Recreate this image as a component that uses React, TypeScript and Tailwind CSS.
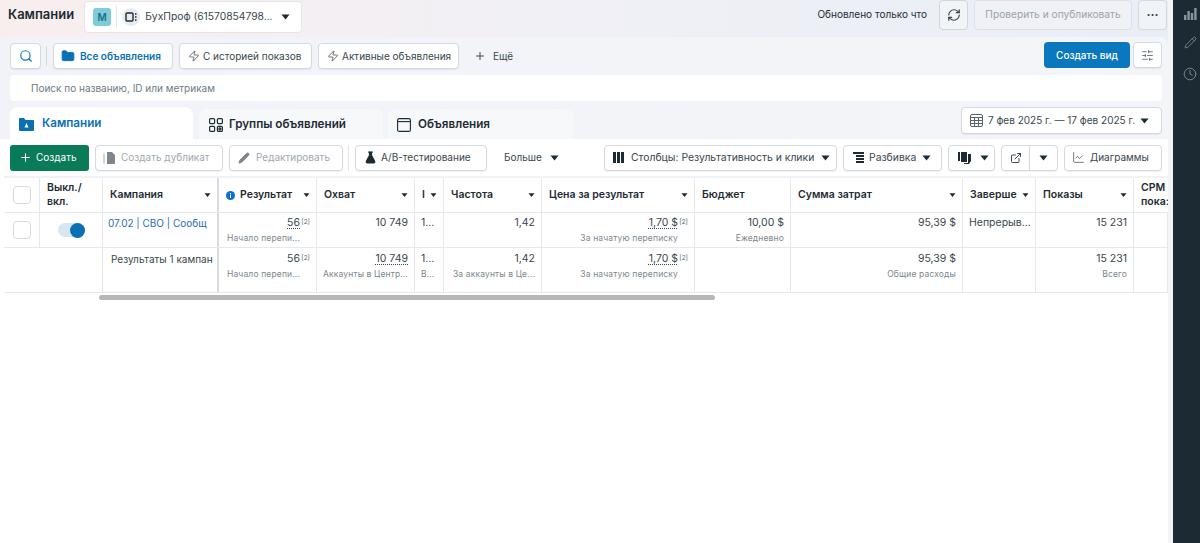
import type { ReactNode } from "react";
import {
  ChartLine,
  Clock,
  ExternalLink,
  FlaskConical,
  Folder,
  Pencil,
  Plus,
  RefreshCw,
  Search,
  SlidersHorizontal,
  Zap,
} from "lucide-react";

const Caret = ({ className = "" }: { className?: string }) => (
  <svg width="9" height="6" viewBox="0 0 9 6" className={`shrink-0 ${className}`}>
    <path d="M0.5 0.5h8L4.5 5.5z" fill="#1c2b33" />
  </svg>
);

const btn =
  "flex h-[26px] shrink-0 items-center whitespace-nowrap rounded-[4px] border border-[#d5dae1] bg-white text-[10px] shadow-[0_1px_1px_rgba(0,0,0,0.06)] [&_svg]:shrink-0";

const columns =
  "grid grid-cols-[36px_63px_114px_2px_98px_98px_29px_98px_153px_96px_172px_73px_98px_34px]";

const HeadCell = ({ children, caret = true, right = true }: { children: ReactNode; caret?: boolean; right?: boolean }) => (
  <div className={`flex h-[34px] items-center justify-between overflow-hidden pl-[7px] pr-[5px] text-[10.5px] font-semibold leading-[14px] text-[#1c2b33] ${right ? "border-r border-[#e6e8eb]" : ""}`}>
    <span className="flex min-w-0 items-center gap-[5px] whitespace-nowrap">{children}</span>
    {caret && <Caret className="ml-1 scale-75" />}
  </div>
);

const Cell = ({
  value,
  sub,
  tall,
  dotted,
  sup,
  left,
}: {
  value?: string;
  sub?: string;
  tall?: boolean;
  dotted?: boolean;
  sup?: boolean;
  left?: boolean;
}) => (
  <div
    className={`overflow-hidden border-r border-[#e6e8eb] pl-[6px] ${sup ? "pr-[16px]" : "pr-[6px]"} ${left ? "text-left" : "text-right"} ${
      tall ? "h-[44px] pt-[4px]" : "h-[34px] pt-[3px]"
    }`}
  >
    {value && (
      <div className="relative whitespace-nowrap text-[10.5px] leading-[14px] text-[#39464e]">
        <span className={dotted ? "underline decoration-dotted decoration-[#39464e] underline-offset-2" : ""}>{value}</span>
        {sup && <span className="absolute -right-[10px] top-[-1px] text-[6.5px] text-[#55626b]">[2]</span>}
      </div>
    )}
    {sub && <div className="mt-[2px] truncate text-[8.5px] leading-[12px] tracking-[0.15px] text-[#7d878e]">{sub}</div>}
  </div>
);

const Check = () => <div className="h-[18px] w-[18px] rounded-[4px] border border-[#d5dae1] bg-white" />;

export default function App() {
  return (
    <div className="flex h-[543px] w-[1200px] overflow-hidden bg-white font-['Inter',sans-serif] text-[#1c2b33]">
      <main className="flex w-[1168px] shrink-0 flex-col">
        <div className="bg-gradient-to-r from-[#f9eeee] via-[#f0f0f6] to-[#e9eef6]">
          <header className="flex h-[37px] items-start pl-2 pr-[1px]">
            <h1 className="mt-[6px] text-[13px] font-semibold leading-[16px]">Кампании</h1>
            <div className="ml-[10px] mt-[1px] flex h-[32px] w-[218px] shrink-0 items-center rounded-[4px] border border-[#e4e6ea] bg-white pl-2 pr-[11px]">
              <span className="flex h-[18px] w-[18px] items-center justify-center rounded-[3px] bg-[#7cccdc] text-[10px] font-semibold text-[#246c7c]">M</span>
              <span className="ml-[5px] h-[22px] w-px bg-[#e4e6ea]" />
              <span className="ml-[5px] flex h-[18px] w-[18px] items-center justify-center rounded-full bg-[#e8ebef]">
                <svg width="12" height="10" viewBox="0 0 12 10" fill="none" stroke="#1c2b33" strokeWidth="1.4">
                  <rect x="1" y="1" width="7" height="8" rx="1" />
                  <path d="M10 2h1.5M10 5h1.5M10 8h1.5" />
                </svg>
              </span>
              <span className="ml-[5px] flex-1 whitespace-nowrap text-[10.3px] text-[#39464e]">БухПроф (61570854798...</span>
              <Caret />
            </div>
            <span className="ml-auto mt-[7px] text-[10px] leading-[14px] text-[#1c2b33]">Обновлено только что</span>
            <div className="ml-3 flex h-[30px] w-[29px] shrink-0 items-center justify-center rounded-[4px] border border-[#d0d6de] bg-[#f2f4f8]">
              <RefreshCw size={14} strokeWidth={2} className="text-[#39464e]" />
            </div>
            <div className="ml-[6px] flex h-[30px] w-[158px] shrink-0 items-center justify-center rounded-[4px] border border-[#dde1e7] bg-[#eff1f6] text-[10.2px] text-[#9aa3aa]">
              Проверить и опубликовать
            </div>
            <div className="ml-[6px] flex h-[30px] w-[29px] shrink-0 items-center justify-center rounded-[4px] border border-[#d5dae1] bg-[#f0f3f8] pb-[6px] text-[12px] font-bold leading-none text-[#39464e]">
              ...
            </div>
          </header>

          <section className="rounded-t-[8px] bg-gradient-to-r from-[#f1f3f8] to-[#f3f5f9] pl-[10px] pr-[6px] pt-[5px]">
            <div className="flex h-[28px] items-center">
              <div className={`${btn} w-[31px] justify-center border-[#8fb6d3]`}>
                <Search size={14} className="text-[#0a78be]" />
              </div>
              <span className="ml-[5px] h-[20px] w-px bg-[#d5dae1]" />
              <div className={`${btn} ml-[6px] w-[120px] gap-[5px] border-[#8fb6d3] pl-[7px] font-semibold text-[#0a70b4]`}>
                <Folder size={14} fill="#0a70b4" strokeWidth={1.5} />
                Все объявления
              </div>
              <div className={`${btn} ml-[6px] w-[133px] gap-[3px] pl-[8px] text-[#39464e]`}>
                <Zap size={12} strokeWidth={1.5} />
                С историей показов
              </div>
              <div className={`${btn} ml-[6px] w-[141px] gap-[3px] pl-[8px] text-[#39464e]`}>
                <Zap size={12} strokeWidth={1.5} />
                Активные объявления
              </div>
              <div className="ml-[15px] flex items-center gap-[7px] text-[10px] text-[#39464e]">
                <Plus size={12} />
                Ещё
              </div>
              <div className="ml-auto -mt-[2px] flex h-[26px] w-[86px] shrink-0 items-center justify-center rounded-[4px] bg-[#0a78be] text-[10px] font-medium text-white">
                Создать вид
              </div>
              <div className={`${btn} ml-[3px] -mt-[2px] w-[29px] justify-center bg-[#f4f6f9] text-[#39464e]`}>
                <SlidersHorizontal size={13} strokeWidth={1.3} />
              </div>
            </div>

            <div className="mt-[5px] flex h-[26px] items-center rounded-[4px] bg-white pl-[21px] text-[10px] text-[#6f7a82]">
              Поиск по названию, ID или метрикам
            </div>

            <div className="mt-[6px] flex h-[32px] items-start">
              <div className="flex h-[32px] w-[183px] shrink-0 items-center gap-[8px] rounded-t-[8px] bg-white pl-[9px] pt-[2px] text-[11.7px] font-semibold text-[#0a70b4]">
                <svg width="15" height="14" viewBox="0 0 15 14">
                  <path d="M0 2a1 1 0 0 1 1-1h4l1.5 2H14a1 1 0 0 1 1 1v9a1 1 0 0 1-1 1H1a1 1 0 0 1-1-1z" fill="#0a70b4" />
                  <path d="M7.5 6l2 4.5h-4z" fill="#fff" />
                </svg>
                Кампании
              </div>
              <div className="ml-[6px] mt-[2px] flex h-[30px] w-[184px] shrink-0 items-center gap-[6px] rounded-t-[8px] bg-[#f7f8fa] pl-[10px] pt-[2px] text-[11.7px] font-semibold">
                <svg width="14" height="14" viewBox="0 0 14 14" fill="none" stroke="#1c2b33" strokeWidth="1.2">
                  <rect x="0.6" y="0.6" width="5" height="5" rx="1" />
                  <rect x="8.4" y="0.6" width="5" height="5" rx="1" />
                  <rect x="0.6" y="8.4" width="5" height="5" rx="1" />
                  <rect x="8.4" y="8.4" width="5" height="5" rx="1" />
                  <circle cx="10.9" cy="10.9" r="1" />
                </svg>
                Группы объявлений
              </div>
              <div className="ml-[5px] mt-[2px] flex h-[30px] w-[185px] shrink-0 items-center gap-[7px] rounded-t-[8px] bg-[#f7f8fa] pl-[9px] pt-[2px] text-[11.7px] font-semibold">
                <svg width="14" height="14" viewBox="0 0 14 14" fill="none" stroke="#1c2b33" strokeWidth="1.1">
                  <rect x="0.6" y="0.6" width="12.8" height="12.8" rx="1.5" />
                  <path d="M0.6 3.6h12.8" />
                </svg>
                Объявления
              </div>
              <div className={`${btn} ml-auto h-[27px] w-[201px] gap-[5px] border-[#ccd2da] bg-[#f1f3f7] pl-[8px] text-[#39464e]`}>
                <svg width="13" height="13" viewBox="0 0 13 13" fill="none" stroke="#55626b" strokeWidth="1">
                  <rect x="0.5" y="0.5" width="12" height="12" rx="1.5" />
                  <path d="M0.5 3.5h12M0.5 6.5h12M0.5 9.5h12M4.5 3.5v9M8.5 3.5v9" />
                </svg>
                <span className="flex-1">7 фев 2025 г. — 17 фев 2025 г.</span>
                <Caret className="mr-[12px]" />
              </div>
            </div>
          </section>
        </div>

        <section className="flex flex-col bg-white pl-[4px]">
          <div className="flex h-[37px] items-center pl-[6px] pr-[6px] text-[10px]">
            <div className="flex h-[26px] w-[79px] shrink-0 items-center gap-[4px] rounded-[3px] bg-[#0a7b58] pl-[9px] text-white">
              <Plus size={13} strokeWidth={2} />
              Создать
            </div>
            <div className={`${btn} ml-[6px] w-[128px] gap-[5px] pl-[7px] text-[#a0a8ae]`}>
              <svg width="13" height="14" viewBox="0 0 13 14">
                <path d="M1 2.5v10" stroke="#a0a8ae" strokeWidth="1" fill="none" />
                <path d="M4 1h5l3 3v8a1 1 0 0 1-1 1H4z" fill="#7e878d" />
              </svg>
              Создать дубликат
            </div>
            <div className={`${btn} ml-[6px] w-[114px] gap-[6px] pl-[8px] text-[#a0a8ae]`}>
              <Pencil size={12} fill="#7e878d" className="text-[#7e878d]" />
              Редактировать
            </div>
            <span className="ml-[5px] h-[26px] w-px shrink-0 bg-[#e4e6ea]" />
            <div className={`${btn} ml-[6px] w-[132px] gap-[4px] border-[#c4cad2] pl-[8px] text-[#39464e]`}>
              <FlaskConical size={13} fill="#1c2b33" className="text-[#1c2b33]" />
              A/B-тестирование
            </div>
            <div className="ml-[17px] flex shrink-0 items-center gap-[8px] text-[#39464e]">
              Больше
              <Caret />
            </div>
            <div className={`${btn} ml-auto w-[233px] gap-[7px] pl-[8px] text-[#39464e]`}>
              <svg width="11" height="11" viewBox="0 0 11 11" fill="#1c2b33">
                <rect width="3" height="11" />
                <rect x="4" width="3" height="11" />
                <rect x="8" width="3" height="11" />
              </svg>
              <span className="flex-1 text-[10.4px]">Столбцы: Результативность и клики</span>
              <Caret className="mr-[8px]" />
            </div>
            <div className={`${btn} ml-[6px] w-[99px] gap-[5px] pl-[9px] text-[#39464e]`}>
              <svg width="11" height="11" viewBox="0 0 11 11" fill="#1c2b33">
                <rect width="11" height="2" />
                <rect x="3" y="3" width="8" height="2" />
                <rect x="3" y="6" width="8" height="2" />
                <rect x="3" y="9" width="8" height="2" />
              </svg>
              <span className="flex-1 text-[10.4px]">Разбивка</span>
              <Caret className="mr-[10px]" />
            </div>
            <div className={`${btn} ml-[6px] w-[47px] gap-[9px] pl-[9px] text-[#39464e]`}>
              <svg width="13" height="12" viewBox="0 0 13 12" fill="#1c2b33">
                <rect width="2" height="9" />
                <rect x="3" width="6" height="10" />
                <path d="M10 2h3v7l-2 3h-5v-1h4z" />
              </svg>
              <Caret />
            </div>
            <div className={`${btn} ml-[6px] w-[57px] text-[#39464e]`}>
              <span className="flex h-full w-[28px] items-center justify-center border-r border-[#d5dae1]">
                <ExternalLink size={12} />
              </span>
              <span className="flex flex-1 justify-center">
                <Caret />
              </span>
            </div>
            <div className={`${btn} ml-[6px] w-[98px] gap-[5px] pl-[7px] text-[#39464e]`}>
              <ChartLine size={13} strokeWidth={1.3} />
              Диаграммы
            </div>
          </div>
          <div className="h-[2px] bg-[#f0f2f5]" />

          <div className={columns}>
            <div className="flex h-[34px] items-center justify-center border-r border-[#e6e8eb]"><Check /></div>
            <HeadCell caret={false}>
              <span className="whitespace-normal">Выкл./ вкл.</span>
            </HeadCell>
            <HeadCell right={false}>Кампания</HeadCell>
            <div className="bg-[#d8dbdf]" />
            <HeadCell>
              <svg width="9" height="9" viewBox="0 0 9 9" className="shrink-0">
                <circle cx="4.5" cy="4.5" r="4.5" fill="#0a70d4" />
                <rect x="4" y="3.6" width="1" height="3.4" fill="#fff" />
                <rect x="4" y="2" width="1" height="1" fill="#fff" />
              </svg>
              Результат
            </HeadCell>
            <HeadCell>Охват</HeadCell>
            <HeadCell>I</HeadCell>
            <HeadCell>Частота</HeadCell>
            <HeadCell>Цена за результат</HeadCell>
            <HeadCell caret={false}>Бюджет</HeadCell>
            <HeadCell>Сумма затрат</HeadCell>
            <HeadCell>Заверше</HeadCell>
            <HeadCell>Показы</HeadCell>
            <HeadCell caret={false} right={false}>
              <span className="whitespace-normal">CPM пока:</span>
            </HeadCell>
          </div>

          <div className={`${columns} border-y border-[#e6e8eb]`}>
            <div className="flex items-center justify-center border-r border-[#e6e8eb]"><Check /></div>
            <div className="flex items-center justify-center border-r border-[#e6e8eb]">
              <div className="relative h-[14px] w-[27px] rounded-full bg-[#d8e6f2]">
                <span className="absolute -top-[0.5px] right-0 h-[15px] w-[15px] rounded-full bg-[#0a70b4]" />
              </div>
            </div>
            <div className="mr-[10px] overflow-hidden whitespace-nowrap pl-[5px] pt-[3px] text-[10px] leading-[14px] text-[#2a6cb8]">07.02 | CBO | Сообщения</div>
            <div className="bg-[#d8dbdf]" />
            <Cell value="56" sub="Начало перепи..." dotted sup />
            <Cell value="10 749" />
            <Cell value="1..." left />
            <Cell value="1,42" />
            <Cell value="1,70 $" sub="За начатую переписку" dotted sup />
            <Cell value="10,00 $" sub="Ежедневно" />
            <Cell value="95,39 $" />
            <Cell value="Непрерыв..." left />
            <Cell value="15 231" />
            <Cell />
          </div>

          <div className={`${columns} border-b border-[#e6e8eb]`}>
            <div className="col-span-2 border-r border-[#e6e8eb]" />
            <div className="mr-[4px] overflow-hidden whitespace-nowrap pl-[8px] pt-[4px] text-[10px] leading-[14px] text-[#39464e]">Результаты 1 кампании</div>
            <div className="bg-[#d8dbdf]" />
            <Cell tall value="56" sub="Начало перепи..." sup />
            <Cell tall value="10 749" sub="Аккаунты в Центре..." dotted />
            <Cell tall value="1..." sub="Вс..." left />
            <Cell tall value="1,42" sub="За аккаунты в Це..." />
            <Cell tall value="1,70 $" sub="За начатую переписку" dotted sup />
            <Cell tall />
            <Cell tall value="95,39 $" sub="Общие расходы" />
            <Cell tall />
            <Cell tall value="15 231" sub="Всего" />
            <Cell tall />
          </div>

          <div className="ml-[95px] mt-[2px] h-[5px] w-[616px] rounded-full bg-[#b4b6b8]" />
        </section>
      </main>

      <aside className="flex flex-1 border-l-[5px] border-[#f1f3f6] bg-[#1c2b33]">
        <div className="flex w-full flex-col items-center gap-[16px] pl-[7px] pt-[6px] text-[#8a969e]">
          <svg width="13" height="14" viewBox="0 0 13 14" fill="currentColor">
            <rect x="0" y="9" width="2.4" height="5" />
            <rect x="3.4" y="5" width="2.4" height="9" />
            <rect x="6.8" y="7" width="2.4" height="7" />
            <rect x="10.2" y="2" width="2.4" height="12" />
          </svg>
          <Pencil size={13} strokeWidth={1.4} />
          <Clock size={14} strokeWidth={1.4} className="mt-[2px]" />
        </div>
      </aside>
    </div>
  );
}
